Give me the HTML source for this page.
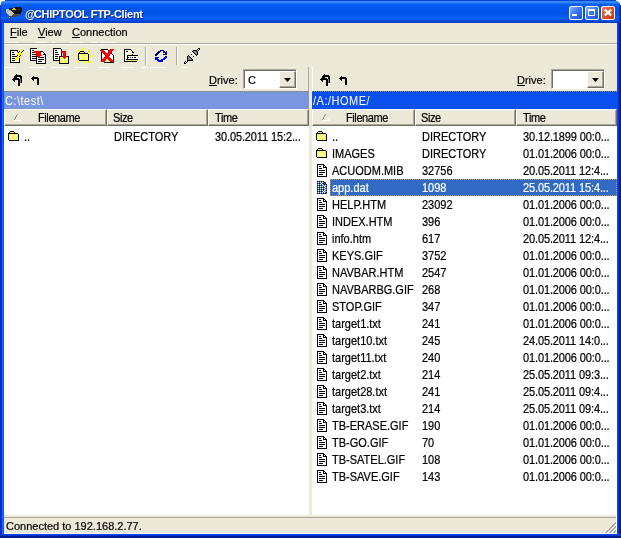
<!DOCTYPE html>
<html><head><meta charset="utf-8">
<style>
html,body{margin:0;padding:0;width:621px;height:538px;overflow:hidden;background:#fff;}
body{position:relative;font-family:"Liberation Sans",sans-serif;font-size:11px;color:#000;}
.t,.ht,.menu,.tt{will-change:transform;}
.t,.ht,.menu{-webkit-text-stroke:0.2px currentColor;}
div,svg,span{position:absolute;box-sizing:border-box;}
svg{overflow:visible;shape-rendering:crispEdges;}
#frame{left:0;top:0;width:621px;height:538px;
 background:linear-gradient(to right,#1020c8 0,#1020c8 1px,#0830d8 1px,#0830d8 2px,#1870f8 2px,#1870f8 3px,#0058e8 3px,#0058e8 617px,#0a44f0 617px,#0a44f0 618px,#0638dc 618px,#0638dc 619px,#0420a8 619px,#0420a8 620px,#001890 620px);}
#title{left:0;top:0;width:621px;height:23px;
 background:linear-gradient(to bottom,#0843d8 0,#0843d8 1px,#3d8cff 1px,#2f80fb 3px,#0a60f4 4px,#0058ee 7px,#0054e6 12px,#0056ea 15px,#0a64fa 17px,#0058ee 19px,#004ee0 21px,#003cc4 22px,#003cc4 23px);}
#bottom{left:0;top:534px;width:621px;height:4px;background:linear-gradient(to bottom,#0a44f0 0,#0a44f0 1px,#0632d0 1px,#0632d0 2px,#0a1a90 2px,#0a1a90 3px,#00188a 3px);}
#client{left:4px;top:23px;width:613px;height:511px;background:#ece9d8;}
.tt{color:#fff;font-weight:bold;font-size:11px;line-height:14px;white-space:nowrap;text-shadow:1px 1px 0 #0a1a80;}
.btn{width:14px;height:14px;top:6px;border:1px solid #fff;border-radius:2px;}
.menu{top:26px;line-height:13px;white-space:nowrap;}
.t{line-height:17px;white-space:nowrap;font-size:11px;transform-origin:0 12px;transform:scaleY(1.12);}
.sel{color:#fff;}
.selbg{width:287px;height:17px;background:#316ac5;}
.ic{position:absolute;}
.hdr{top:109px;height:17px;background:#ece9d8;}
.ht{top:109px;line-height:17px;white-space:nowrap;font-size:11px;letter-spacing:-0.4px;transform-origin:0 12px;transform:scaleY(1.12);}
</style></head><body>
<svg width="0" height="0" style="position:absolute">
 <defs>
  <pattern id="dy" width="2" height="2" patternUnits="userSpaceOnUse"><rect width="2" height="2" fill="#ffff00"/><rect width="1" height="1" fill="#fff"/><rect x="1" y="1" width="1" height="1" fill="#fff"/></pattern>
  <pattern id="db" width="2" height="2" patternUnits="userSpaceOnUse"><rect width="2" height="2" fill="#316ac5"/><rect width="1" height="1" fill="#000"/><rect x="1" y="1" width="1" height="1" fill="#000"/></pattern>
  <pattern id="dw" width="2" height="2" patternUnits="userSpaceOnUse"><rect width="2" height="2" fill="#316ac5"/><rect width="1" height="1" fill="#fff"/><rect x="1" y="1" width="1" height="1" fill="#fff"/></pattern>
  <g id="ifolder">
   <rect x="2" y="3" width="4" height="1" fill="#000"/>
   <rect x="1" y="4" width="1" height="1" fill="#000"/><rect x="6" y="4" width="1" height="1" fill="#000"/>
   <rect x="2" y="4" width="4" height="1" fill="url(#dy)"/>
   <rect x="0" y="5" width="10" height="1" fill="#000"/>
   <rect x="0" y="5" width="1" height="7" fill="#000"/>
   <rect x="1" y="6" width="9" height="6" fill="url(#dy)"/>
   <rect x="10" y="6" width="1" height="7" fill="#000"/>
   <rect x="1" y="12" width="10" height="1" fill="#000"/>
  </g>
  <g id="ifile">
   <path d="M1 2H8L11 5V15H1Z" fill="#fff"/>
   <rect x="1" y="2" width="7" height="1" fill="#000"/>
   <rect x="1" y="2" width="1" height="13" fill="#000"/>
   <rect x="1" y="14" width="10" height="1" fill="#000"/>
   <rect x="10" y="5" width="1" height="10" fill="#000"/>
   <rect x="7" y="3" width="2" height="1" fill="#000"/><rect x="7" y="4" width="1" height="1" fill="#000"/><rect x="9" y="4" width="1" height="1" fill="#000"/><rect x="7" y="5" width="3" height="1" fill="#000"/>
   <rect x="3" y="4" width="2" height="1" fill="#000"/>
   <rect x="3" y="6" width="3" height="1" fill="#000"/>
   <rect x="3" y="8" width="6" height="1" fill="#000"/>
   <rect x="3" y="10" width="6" height="1" fill="#000"/>
   <rect x="3" y="12" width="4" height="1" fill="#000"/>
  </g>
  <g id="ifilesel">
   <path d="M1 2H8L11 5V15H1Z" fill="url(#db)"/>
   <path d="M2 3H7V6H10V14H2Z" fill="url(#dw)"/>
  </g>
 </defs>
</svg>

<div id="frame"></div>
<div id="title"></div>
<div id="bottom"></div>
<div id="client"></div>

<!-- title icon -->
<svg style="left:0;top:0" width="24" height="22">
<rect x="14" y="7" width="7" height="1" fill="#101010"/>
<rect x="10" y="8" width="12" height="1" fill="#101010"/>
<rect x="13" y="8" width="2" height="1" fill="#d8c020"/>
<rect x="6" y="9" width="3" height="1" fill="#c4c0b8"/>
<rect x="9" y="9" width="13" height="1" fill="#101010"/>
<rect x="12" y="9" width="4" height="1" fill="#d8c020"/>
<rect x="18" y="9" width="2" height="1" fill="#a02010"/>
<rect x="6" y="10" width="5" height="1" fill="#c4c0b8"/>
<rect x="11" y="10" width="11" height="1" fill="#101010"/>
<rect x="6" y="11" width="6" height="1" fill="#c4c0b8"/>
<rect x="12" y="11" width="10" height="1" fill="#101010"/>
<rect x="6" y="12" width="7" height="1" fill="#c4c0b8"/>
<rect x="9" y="12" width="1" height="1" fill="#ffffff"/>
<rect x="13" y="12" width="8" height="1" fill="#101010"/>
<rect x="7" y="13" width="7" height="1" fill="#c4c0b8"/>
<rect x="14" y="13" width="7" height="1" fill="#101010"/>
<rect x="8" y="14" width="5" height="1" fill="#c4c0b8"/>
<rect x="13" y="14" width="7" height="1" fill="#504840"/>
<rect x="9" y="15" width="3" height="1" fill="#c4c0b8"/>
<rect x="12" y="15" width="6" height="1" fill="#504840"/>
<rect x="9" y="16" width="5" height="1" fill="#504840"/>
<rect x="15" y="16" width="2" height="1" fill="#504840"/>
<rect x="9" y="17" width="1" height="1" fill="#ffffff"/>
<rect x="10" y="17" width="1" height="1" fill="#504840"/>
<rect x="9" y="18" width="2" height="1" fill="#504840"/>
</svg>
<svg style="left:0;top:0" width="6" height="6"><path d="M0 0H5V1H2V2H1V3H1V5H0Z" fill="#fff"/></svg>
<svg style="left:615px;top:0" width="6" height="6"><path d="M6 0H1V1H3V2H4V3H5V5H6Z" fill="#fff"/></svg>
<div style="left:619px;top:5px;width:2px;height:18px;background:linear-gradient(to right,#0838c8,#0020a0)"></div>
<div style="left:0;top:5px;width:1px;height:18px;background:#0830c8"></div>
<div class="tt" style="left:25px;top:7px;letter-spacing:-0.3px;"><span style="position:static;letter-spacing:-1.8px">@</span>CHIPTOOL FTP-Client</div>
<!-- caption buttons -->
<div class="btn" style="left:569px;background:linear-gradient(135deg,#8cb0ff 0,#4a84f8 35%,#2a62ea 70%,#1c4fd8 100%)"></div>
<div style="left:572px;top:14px;width:5px;height:2px;background:#fff"></div>
<div class="btn" style="left:585px;background:linear-gradient(135deg,#8cb0ff 0,#4a84f8 35%,#2a62ea 70%,#1c4fd8 100%)"></div>
<div style="left:588px;top:9px;width:7px;height:7px;border:1px solid #fff;border-top-width:2px"></div>
<div class="btn" style="left:601px;background:linear-gradient(135deg,#f28a6a 0,#e25c34 30%,#d4481e 70%,#c03810 100%)"></div>
<svg style="left:604px;top:9px" width="8" height="7"><path d="M0.8 0.6L7.2 6.4M7.2 0.6L0.8 6.4" stroke="#fff" stroke-width="2.2" shape-rendering="geometricPrecision"/></svg>
<!-- menu -->
<div class="menu" style="left:10px"><u>F</u>ile</div>
<div class="menu" style="left:38px"><u>V</u>iew</div>
<div class="menu" style="left:72px"><u>C</u>onnection</div>
<div style="left:4px;top:42px;width:14px;height:1px;background:#fff"></div><div style="left:35px;top:42px;width:12px;height:1px;background:#fff"></div><div style="left:52px;top:42px;width:3px;height:1px;background:#fff"></div><div style="left:70px;top:42px;width:13px;height:1px;background:#fff"></div><div style="left:91px;top:42px;width:7px;height:1px;background:#fff"></div><div style="left:100px;top:42px;width:16px;height:1px;background:#fff"></div>
<div style="left:4px;top:43px;width:613px;height:1px;background:#aca899"></div>
<div style="left:4px;top:44px;width:613px;height:1px;background:#fff"></div>

<!-- toolbar icons -->
<svg style="left:0;top:0" width="621" height="100"><rect x="11" y="51" width="8" height="11" fill="#ffffff"/><rect x="10" y="50" width="8" height="1" fill="#000000"/><rect x="10" y="50" width="1" height="13" fill="#000000"/><rect x="10" y="62" width="10" height="1" fill="#000000"/><rect x="19" y="56" width="1" height="7" fill="#000000"/><rect x="17" y="51" width="1" height="1" fill="#000000"/><rect x="17" y="52" width="1" height="1" fill="#ffffff"/><rect x="18" y="52" width="1" height="1" fill="#000000"/><rect x="12" y="52" width="2" height="1" fill="#000000"/><rect x="12" y="54" width="3" height="1" fill="#000000"/><rect x="12" y="56" width="5" height="1" fill="#000000"/><rect x="12" y="58" width="4" height="1" fill="#000000"/><rect x="12" y="60" width="4" height="1" fill="#000000"/><rect x="22" y="50" width="1" height="1" fill="#ffff00"/><rect x="21" y="50" width="1" height="1" fill="#ffff00"/><rect x="23" y="50" width="1" height="1" fill="#000000"/><rect x="20" y="51" width="2" height="1" fill="#ffff00"/><rect x="19" y="51" width="1" height="1" fill="#000000"/><rect x="22" y="51" width="1" height="1" fill="#000000"/><rect x="19" y="52" width="2" height="1" fill="#ffff00"/><rect x="18" y="52" width="1" height="1" fill="#000000"/><rect x="21" y="52" width="1" height="1" fill="#000000"/><rect x="19" y="53" width="2" height="1" fill="#ffff00"/><rect x="18" y="53" width="1" height="1" fill="#ffff00"/><rect x="21" y="53" width="1" height="1" fill="#ffff00"/><rect x="18" y="54" width="2" height="1" fill="#ffff00"/><rect x="17" y="54" width="1" height="1" fill="#ffff00"/><rect x="20" y="54" width="1" height="1" fill="#ffff00"/><rect x="18" y="55" width="2" height="1" fill="#ffff00"/><rect x="17" y="55" width="1" height="1" fill="#000000"/><rect x="20" y="55" width="1" height="1" fill="#000000"/><rect x="17" y="56" width="2" height="1" fill="#ffff00"/><rect x="16" y="56" width="1" height="1" fill="#000000"/><rect x="19" y="56" width="1" height="1" fill="#000000"/><rect x="17" y="57" width="2" height="1" fill="#ffff00"/><rect x="16" y="57" width="1" height="1" fill="#ffff00"/><rect x="19" y="57" width="1" height="1" fill="#ffff00"/><rect x="16" y="58" width="2" height="1" fill="#ffff00"/><rect x="15" y="58" width="1" height="1" fill="#ffff00"/><rect x="18" y="58" width="1" height="1" fill="#ffff00"/><rect x="15" y="59" width="2" height="1" fill="#ffff00"/><rect x="14" y="59" width="1" height="1" fill="#ffff00"/><rect x="17" y="59" width="1" height="1" fill="#ffff00"/><rect x="15" y="60" width="1" height="1" fill="#ffff00"/><rect x="14" y="60" width="1" height="1" fill="#000000"/><rect x="16" y="60" width="1" height="1" fill="#ffff00"/><rect x="31" y="49" width="6" height="11" fill="#ffffff"/><rect x="30" y="48" width="7" height="1" fill="#000000"/><rect x="30" y="48" width="1" height="13" fill="#000000"/><rect x="30" y="60" width="7" height="1" fill="#000000"/><rect x="32" y="50" width="2" height="1" fill="#000000"/><rect x="32" y="52" width="2" height="1" fill="#000000"/><rect x="32" y="54" width="4" height="1" fill="#000000"/><rect x="32" y="56" width="4" height="1" fill="#000000"/><rect x="32" y="58" width="4" height="1" fill="#000000"/><rect x="37" y="52" width="8" height="11" fill="#ffffff"/><rect x="36" y="51" width="7" height="1" fill="#000000"/><rect x="36" y="51" width="1" height="13" fill="#000000"/><rect x="36" y="63" width="10" height="1" fill="#000000"/><rect x="45" y="54" width="1" height="10" fill="#000000"/><rect x="43" y="52" width="1" height="1" fill="#000000"/><rect x="44" y="53" width="1" height="1" fill="#000000"/><rect x="43" y="53" width="1" height="1" fill="#ffffff"/><rect x="43" y="54" width="2" height="1" fill="#000000"/><rect x="38" y="57" width="6" height="1" fill="#000000"/><rect x="38" y="59" width="6" height="1" fill="#000000"/><rect x="38" y="61" width="4" height="1" fill="#000000"/><rect x="34" y="51" width="6" height="1" fill="#ff0000"/><rect x="34" y="52" width="7" height="1" fill="#ff0000"/><rect x="36" y="53" width="5" height="2" fill="#ff0000"/><rect x="36" y="55" width="6" height="1" fill="#ff0000"/><rect x="37" y="56" width="3" height="1" fill="#ff0000"/><rect x="38" y="57" width="1" height="1" fill="#ff0000"/><rect x="54" y="49" width="7" height="11" fill="#ffffff"/><rect x="53" y="48" width="8" height="1" fill="#000000"/><rect x="53" y="48" width="1" height="13" fill="#000000"/><rect x="53" y="60" width="6" height="1" fill="#000000"/><rect x="61" y="50" width="1" height="6" fill="#000000"/><rect x="61" y="49" width="1" height="1" fill="#000000"/><rect x="60" y="50" width="1" height="1" fill="#ffffff"/><rect x="55" y="50" width="2" height="1" fill="#000000"/><rect x="55" y="52" width="3" height="1" fill="#000000"/><rect x="55" y="54" width="4" height="1" fill="#000000"/><rect x="55" y="56" width="3" height="1" fill="#000000"/><rect x="55" y="58" width="3" height="1" fill="#000000"/><rect x="59" y="56" width="10" height="1" fill="#000000"/><rect x="59" y="56" width="1" height="8" fill="#000000"/><rect x="68" y="56" width="1" height="8" fill="#000000"/><rect x="59" y="63" width="10" height="1" fill="#000000"/><rect x="60" y="57" width="8" height="6" fill="#ffff00"/><rect x="61" y="57" width="1" height="1" fill="#ffffff"/><rect x="63" y="57" width="1" height="1" fill="#ffffff"/><rect x="65" y="57" width="1" height="1" fill="#ffffff"/><rect x="67" y="57" width="1" height="1" fill="#ffffff"/><rect x="60" y="58" width="1" height="1" fill="#ffffff"/><rect x="62" y="58" width="1" height="1" fill="#ffffff"/><rect x="64" y="58" width="1" height="1" fill="#ffffff"/><rect x="66" y="58" width="1" height="1" fill="#ffffff"/><rect x="61" y="59" width="1" height="1" fill="#ffffff"/><rect x="63" y="59" width="1" height="1" fill="#ffffff"/><rect x="65" y="59" width="1" height="1" fill="#ffffff"/><rect x="67" y="59" width="1" height="1" fill="#ffffff"/><rect x="60" y="60" width="1" height="1" fill="#ffffff"/><rect x="62" y="60" width="1" height="1" fill="#ffffff"/><rect x="64" y="60" width="1" height="1" fill="#ffffff"/><rect x="66" y="60" width="1" height="1" fill="#ffffff"/><rect x="61" y="61" width="1" height="1" fill="#ffffff"/><rect x="63" y="61" width="1" height="1" fill="#ffffff"/><rect x="65" y="61" width="1" height="1" fill="#ffffff"/><rect x="67" y="61" width="1" height="1" fill="#ffffff"/><rect x="60" y="62" width="1" height="1" fill="#ffffff"/><rect x="62" y="62" width="1" height="1" fill="#ffffff"/><rect x="64" y="62" width="1" height="1" fill="#ffffff"/><rect x="66" y="62" width="1" height="1" fill="#ffffff"/><rect x="61" y="51" width="5" height="1" fill="#ff0000"/><rect x="62" y="52" width="4" height="1" fill="#ff0000"/><rect x="63" y="53" width="3" height="3" fill="#ff0000"/><rect x="62" y="56" width="5" height="1" fill="#ff0000"/><rect x="63" y="57" width="3" height="1" fill="#ff0000"/><rect x="64" y="58" width="1" height="1" fill="#ff0000"/><rect x="82" y="48" width="2" height="3" fill="#ffff00"/><rect x="77" y="50" width="2" height="2" fill="#ffff00"/><rect x="88" y="50" width="2" height="3" fill="#ffff00"/><rect x="76" y="55" width="2" height="2" fill="#ffff00"/><rect x="90" y="55" width="3" height="2" fill="#ffff00"/><rect x="77" y="61" width="2" height="2" fill="#ffff00"/><rect x="84" y="61" width="2" height="2" fill="#ffff00"/><rect x="88" y="61" width="3" height="2" fill="#ffff00"/><rect x="80" y="51" width="4" height="1" fill="#000000"/><rect x="79" y="52" width="1" height="1" fill="#000000"/><rect x="84" y="52" width="1" height="1" fill="#000000"/><rect x="80" y="52" width="4" height="1" fill="#ffff00"/><rect x="80" y="52" width="1" height="1" fill="#ffffff"/><rect x="82" y="52" width="1" height="1" fill="#ffffff"/><rect x="78" y="53" width="10" height="1" fill="#000000"/><rect x="78" y="53" width="1" height="7" fill="#000000"/><rect x="79" y="54" width="9" height="6" fill="#ffff00"/><rect x="80" y="54" width="1" height="1" fill="#ffffff"/><rect x="82" y="54" width="1" height="1" fill="#ffffff"/><rect x="84" y="54" width="1" height="1" fill="#ffffff"/><rect x="86" y="54" width="1" height="1" fill="#ffffff"/><rect x="79" y="55" width="1" height="1" fill="#ffffff"/><rect x="81" y="55" width="1" height="1" fill="#ffffff"/><rect x="83" y="55" width="1" height="1" fill="#ffffff"/><rect x="85" y="55" width="1" height="1" fill="#ffffff"/><rect x="87" y="55" width="1" height="1" fill="#ffffff"/><rect x="80" y="56" width="1" height="1" fill="#ffffff"/><rect x="82" y="56" width="1" height="1" fill="#ffffff"/><rect x="84" y="56" width="1" height="1" fill="#ffffff"/><rect x="86" y="56" width="1" height="1" fill="#ffffff"/><rect x="79" y="57" width="1" height="1" fill="#ffffff"/><rect x="81" y="57" width="1" height="1" fill="#ffffff"/><rect x="83" y="57" width="1" height="1" fill="#ffffff"/><rect x="85" y="57" width="1" height="1" fill="#ffffff"/><rect x="87" y="57" width="1" height="1" fill="#ffffff"/><rect x="80" y="58" width="1" height="1" fill="#ffffff"/><rect x="82" y="58" width="1" height="1" fill="#ffffff"/><rect x="84" y="58" width="1" height="1" fill="#ffffff"/><rect x="86" y="58" width="1" height="1" fill="#ffffff"/><rect x="79" y="59" width="1" height="1" fill="#ffffff"/><rect x="81" y="59" width="1" height="1" fill="#ffffff"/><rect x="83" y="59" width="1" height="1" fill="#ffffff"/><rect x="85" y="59" width="1" height="1" fill="#ffffff"/><rect x="87" y="59" width="1" height="1" fill="#ffffff"/><rect x="88" y="54" width="1" height="7" fill="#000000"/><rect x="79" y="60" width="10" height="1" fill="#000000"/><rect x="102" y="50" width="11" height="12" fill="#ffffff"/><rect x="101" y="49" width="7" height="1" fill="#000000"/><rect x="101" y="49" width="1" height="13" fill="#000000"/><rect x="101" y="61" width="3" height="1" fill="#000000"/><rect x="104" y="62" width="10" height="1" fill="#000000"/><rect x="113" y="56" width="1" height="7" fill="#000000"/><rect x="108" y="50" width="1" height="1" fill="#000000"/><rect x="109" y="51" width="1" height="1" fill="#000000"/><rect x="110" y="52" width="1" height="1" fill="#000000"/><rect x="111" y="53" width="1" height="1" fill="#000000"/><rect x="112" y="54" width="1" height="1" fill="#000000"/><rect x="113" y="55" width="1" height="1" fill="#000000"/><rect x="107" y="57" width="1" height="1" fill="#ffff00"/><rect x="107" y="57" width="1" height="1" fill="#ffffff"/><rect x="106" y="58" width="3" height="1" fill="#ffff00"/><rect x="106" y="58" width="1" height="1" fill="#ffffff"/><rect x="108" y="58" width="1" height="1" fill="#ffffff"/><rect x="105" y="59" width="5" height="1" fill="#ffff00"/><rect x="105" y="59" width="1" height="1" fill="#ffffff"/><rect x="107" y="59" width="1" height="1" fill="#ffffff"/><rect x="109" y="59" width="1" height="1" fill="#ffffff"/><rect x="104" y="60" width="7" height="1" fill="#ffff00"/><rect x="104" y="60" width="1" height="1" fill="#ffffff"/><rect x="106" y="60" width="1" height="1" fill="#ffffff"/><rect x="108" y="60" width="1" height="1" fill="#ffffff"/><rect x="110" y="60" width="1" height="1" fill="#ffffff"/><rect x="103" y="61" width="9" height="1" fill="#ffff00"/><rect x="103" y="61" width="1" height="1" fill="#ffffff"/><rect x="105" y="61" width="1" height="1" fill="#ffffff"/><rect x="107" y="61" width="1" height="1" fill="#ffffff"/><rect x="109" y="61" width="1" height="1" fill="#ffffff"/><rect x="111" y="61" width="1" height="1" fill="#ffffff"/><rect x="100" y="50" width="4" height="1" fill="#ff0000"/><rect x="101" y="51" width="4" height="1" fill="#ff0000"/><rect x="102" y="52" width="4" height="1" fill="#ff0000"/><rect x="103" y="53" width="4" height="1" fill="#ff0000"/><rect x="104" y="54" width="4" height="1" fill="#ff0000"/><rect x="105" y="55" width="4" height="1" fill="#ff0000"/><rect x="105" y="56" width="4" height="1" fill="#ff0000"/><rect x="106" y="57" width="4" height="1" fill="#ff0000"/><rect x="107" y="58" width="4" height="1" fill="#ff0000"/><rect x="108" y="59" width="4" height="1" fill="#ff0000"/><rect x="109" y="60" width="4" height="1" fill="#ff0000"/><rect x="110" y="61" width="4" height="1" fill="#ff0000"/><rect x="110" y="49" width="4" height="1" fill="#ff0000"/><rect x="109" y="50" width="4" height="1" fill="#ff0000"/><rect x="108" y="51" width="4" height="1" fill="#ff0000"/><rect x="108" y="52" width="4" height="1" fill="#ff0000"/><rect x="107" y="53" width="4" height="1" fill="#ff0000"/><rect x="106" y="54" width="4" height="1" fill="#ff0000"/><rect x="106" y="55" width="4" height="1" fill="#ff0000"/><rect x="105" y="56" width="4" height="1" fill="#ff0000"/><rect x="104" y="57" width="4" height="1" fill="#ff0000"/><rect x="103" y="58" width="4" height="1" fill="#ff0000"/><rect x="102" y="59" width="4" height="1" fill="#ff0000"/><rect x="102" y="60" width="4" height="1" fill="#ff0000"/><rect x="101" y="61" width="4" height="1" fill="#ff0000"/><rect x="125" y="50" width="7" height="11" fill="#ffffff"/><rect x="124" y="49" width="7" height="1" fill="#000000"/><rect x="124" y="49" width="1" height="13" fill="#000000"/><rect x="124" y="61" width="3" height="1" fill="#000000"/><rect x="131" y="50" width="1" height="1" fill="#000000"/><rect x="132" y="51" width="1" height="1" fill="#000000"/><rect x="133" y="52" width="1" height="1" fill="#000000"/><rect x="132" y="52" width="1" height="3" fill="#000000"/><rect x="131" y="51" width="1" height="1" fill="#ffffff"/><rect x="132" y="53" width="1" height="1" fill="#ffffff"/><rect x="126" y="51" width="2" height="1" fill="#000000"/><rect x="128" y="54" width="4" height="1" fill="#ffff00"/><rect x="128" y="54" width="1" height="1" fill="#ffffff"/><rect x="130" y="54" width="1" height="1" fill="#ffffff"/><rect x="127" y="55" width="11" height="1" fill="#000000"/><rect x="128" y="56" width="10" height="3" fill="#ffffff"/><rect x="127" y="55" width="1" height="5" fill="#000000"/><rect x="128" y="57" width="1" height="1" fill="#000000"/><rect x="130" y="57" width="1" height="1" fill="#000000"/><rect x="132" y="57" width="1" height="1" fill="#000000"/><rect x="134" y="57" width="1" height="1" fill="#000000"/><rect x="135" y="57" width="1" height="1" fill="#000000"/><rect x="126" y="59" width="12" height="1" fill="#000000"/><rect x="127" y="60" width="9" height="1" fill="#ffff00"/><rect x="128" y="60" width="1" height="1" fill="#ffffff"/><rect x="130" y="60" width="1" height="1" fill="#ffffff"/><rect x="132" y="60" width="1" height="1" fill="#ffffff"/><rect x="134" y="60" width="1" height="1" fill="#ffffff"/><rect x="127" y="61" width="10" height="1" fill="#000000"/><rect x="198" y="48" width="2" height="1" fill="#000000"/><rect x="197" y="49" width="3" height="1" fill="#000000"/><rect x="198" y="49" width="1" height="1" fill="#ffffff"/><rect x="196" y="50" width="3" height="1" fill="#000000"/><rect x="197" y="50" width="1" height="1" fill="#ffffff"/><rect x="196" y="51" width="2" height="1" fill="#000000"/><rect x="193" y="50" width="4" height="1" fill="#000000"/><rect x="192" y="51" width="1" height="1" fill="#000000"/><rect x="193" y="51" width="4" height="1" fill="#808080"/><rect x="197" y="51" width="1" height="1" fill="#000000"/><rect x="193" y="52" width="1" height="1" fill="#000000"/><rect x="194" y="52" width="3" height="1" fill="#808080"/><rect x="197" y="52" width="1" height="1" fill="#000000"/><rect x="194" y="53" width="1" height="1" fill="#000000"/><rect x="195" y="53" width="2" height="1" fill="#808080"/><rect x="197" y="53" width="1" height="1" fill="#000000"/><rect x="195" y="54" width="1" height="1" fill="#000000"/><rect x="196" y="54" width="1" height="1" fill="#808080"/><rect x="197" y="54" width="1" height="1" fill="#000000"/><rect x="196" y="55" width="1" height="1" fill="#000000"/><rect x="191" y="54" width="1" height="1" fill="#000000"/><rect x="193" y="56" width="1" height="1" fill="#000000"/><rect x="188" y="55" width="1" height="1" fill="#000000"/><rect x="187" y="56" width="1" height="5" fill="#000000"/><rect x="188" y="56" width="1" height="1" fill="#808080"/><rect x="189" y="56" width="1" height="1" fill="#000000"/><rect x="188" y="57" width="2" height="1" fill="#808080"/><rect x="190" y="57" width="1" height="1" fill="#000000"/><rect x="188" y="58" width="3" height="1" fill="#808080"/><rect x="191" y="58" width="1" height="1" fill="#000000"/><rect x="188" y="59" width="4" height="1" fill="#808080"/><rect x="192" y="59" width="1" height="1" fill="#000000"/><rect x="187" y="60" width="6" height="1" fill="#000000"/><rect x="185" y="61" width="3" height="1" fill="#000000"/><rect x="186" y="61" width="1" height="1" fill="#ffffff"/><rect x="184" y="62" width="3" height="1" fill="#000000"/><rect x="185" y="62" width="1" height="1" fill="#ffffff"/><rect x="184" y="63" width="2" height="1" fill="#000000"/><rect x="160" y="50" width="4" height="1" fill="#000080"/><rect x="158" y="51" width="7" height="1" fill="#000080"/><rect x="157" y="52" width="3" height="1" fill="#000080"/><rect x="163" y="52" width="4" height="1" fill="#000080"/><rect x="156" y="53" width="3" height="1" fill="#000080"/><rect x="165" y="53" width="2" height="1" fill="#000080"/><rect x="155" y="54" width="3" height="1" fill="#000080"/><rect x="163" y="54" width="4" height="1" fill="#000080"/><rect x="155" y="55" width="2" height="1" fill="#000080"/><rect x="166" y="51" width="1" height="1" fill="#000080"/><rect x="161" y="51" width="1" height="1" fill="#ece9d8"/><rect x="162" y="51" width="1" height="1" fill="#ece9d8"/><rect x="165" y="56" width="2" height="1" fill="#0000ff"/><rect x="155" y="57" width="4" height="1" fill="#0000ff"/><rect x="164" y="57" width="3" height="1" fill="#0000ff"/><rect x="155" y="58" width="3" height="1" fill="#0000ff"/><rect x="163" y="58" width="3" height="1" fill="#0000ff"/><rect x="155" y="59" width="1" height="1" fill="#0000ff"/><rect x="156" y="59" width="3" height="1" fill="#0000ff"/><rect x="161" y="59" width="4" height="1" fill="#0000ff"/><rect x="157" y="60" width="6" height="1" fill="#0000ff"/><rect x="158" y="61" width="5" height="1" fill="#0000ff"/><rect x="16" y="74" width="1" height="1" fill="#000000"/><rect x="15" y="75" width="1" height="1" fill="#000000"/><rect x="16" y="75" width="1" height="1" fill="#000000"/><rect x="17" y="75" width="1" height="1" fill="#000000"/><rect x="18" y="75" width="1" height="1" fill="#000000"/><rect x="19" y="75" width="1" height="1" fill="#000000"/><rect x="20" y="75" width="1" height="1" fill="#000000"/><rect x="14" y="76" width="1" height="1" fill="#000000"/><rect x="15" y="76" width="1" height="1" fill="#000000"/><rect x="16" y="76" width="1" height="1" fill="#000000"/><rect x="17" y="76" width="1" height="1" fill="#000000"/><rect x="18" y="76" width="1" height="1" fill="#000000"/><rect x="19" y="76" width="1" height="1" fill="#000000"/><rect x="20" y="76" width="1" height="1" fill="#000000"/><rect x="21" y="76" width="1" height="1" fill="#000000"/><rect x="15" y="77" width="1" height="1" fill="#000000"/><rect x="16" y="77" width="1" height="1" fill="#000000"/><rect x="20" y="77" width="1" height="1" fill="#000000"/><rect x="21" y="77" width="1" height="1" fill="#000000"/><rect x="16" y="78" width="1" height="1" fill="#000000"/><rect x="20" y="78" width="1" height="1" fill="#000000"/><rect x="21" y="78" width="1" height="1" fill="#000000"/><rect x="20" y="79" width="1" height="1" fill="#000000"/><rect x="21" y="79" width="1" height="1" fill="#000000"/><rect x="20" y="80" width="1" height="1" fill="#000000"/><rect x="21" y="80" width="1" height="1" fill="#000000"/><rect x="20" y="81" width="1" height="1" fill="#000000"/><rect x="21" y="81" width="1" height="1" fill="#000000"/><rect x="20" y="82" width="1" height="1" fill="#000000"/><rect x="21" y="82" width="1" height="1" fill="#000000"/><rect x="20" y="79" width="1" height="1" fill="#808080"/><rect x="20" y="80" width="1" height="1" fill="#808080"/><rect x="20" y="81" width="1" height="1" fill="#808080"/><rect x="20" y="82" width="1" height="1" fill="#808080"/><rect x="14" y="77" width="1" height="1" fill="#000000"/><rect x="13" y="78" width="1" height="1" fill="#000000"/><rect x="14" y="78" width="1" height="1" fill="#000000"/><rect x="15" y="78" width="1" height="1" fill="#000000"/><rect x="16" y="78" width="1" height="1" fill="#000000"/><rect x="17" y="78" width="1" height="1" fill="#000000"/><rect x="18" y="78" width="1" height="1" fill="#000000"/><rect x="12" y="79" width="1" height="1" fill="#000000"/><rect x="13" y="79" width="1" height="1" fill="#000000"/><rect x="14" y="79" width="1" height="1" fill="#000000"/><rect x="15" y="79" width="1" height="1" fill="#000000"/><rect x="16" y="79" width="1" height="1" fill="#000000"/><rect x="17" y="79" width="1" height="1" fill="#000000"/><rect x="18" y="79" width="1" height="1" fill="#000000"/><rect x="19" y="79" width="1" height="1" fill="#000000"/><rect x="13" y="80" width="1" height="1" fill="#000000"/><rect x="14" y="80" width="1" height="1" fill="#000000"/><rect x="18" y="80" width="1" height="1" fill="#000000"/><rect x="19" y="80" width="1" height="1" fill="#000000"/><rect x="14" y="81" width="1" height="1" fill="#000000"/><rect x="18" y="81" width="1" height="1" fill="#000000"/><rect x="19" y="81" width="1" height="1" fill="#000000"/><rect x="18" y="82" width="1" height="1" fill="#000000"/><rect x="19" y="82" width="1" height="1" fill="#000000"/><rect x="18" y="83" width="1" height="1" fill="#000000"/><rect x="19" y="83" width="1" height="1" fill="#000000"/><rect x="18" y="84" width="1" height="1" fill="#000000"/><rect x="19" y="84" width="1" height="1" fill="#000000"/><rect x="18" y="85" width="1" height="1" fill="#000000"/><rect x="19" y="85" width="1" height="1" fill="#000000"/><rect x="33" y="76" width="1" height="1" fill="#000000"/><rect x="32" y="77" width="1" height="1" fill="#000000"/><rect x="33" y="77" width="1" height="1" fill="#000000"/><rect x="34" y="77" width="1" height="1" fill="#000000"/><rect x="35" y="77" width="1" height="1" fill="#000000"/><rect x="36" y="77" width="1" height="1" fill="#000000"/><rect x="37" y="77" width="1" height="1" fill="#000000"/><rect x="31" y="78" width="1" height="1" fill="#000000"/><rect x="32" y="78" width="1" height="1" fill="#000000"/><rect x="33" y="78" width="1" height="1" fill="#000000"/><rect x="34" y="78" width="1" height="1" fill="#000000"/><rect x="35" y="78" width="1" height="1" fill="#000000"/><rect x="36" y="78" width="1" height="1" fill="#000000"/><rect x="37" y="78" width="1" height="1" fill="#000000"/><rect x="38" y="78" width="1" height="1" fill="#000000"/><rect x="32" y="79" width="1" height="1" fill="#000000"/><rect x="33" y="79" width="1" height="1" fill="#000000"/><rect x="37" y="79" width="1" height="1" fill="#000000"/><rect x="38" y="79" width="1" height="1" fill="#000000"/><rect x="33" y="80" width="1" height="1" fill="#000000"/><rect x="37" y="80" width="1" height="1" fill="#000000"/><rect x="38" y="80" width="1" height="1" fill="#000000"/><rect x="37" y="81" width="1" height="1" fill="#000000"/><rect x="38" y="81" width="1" height="1" fill="#000000"/><rect x="37" y="82" width="1" height="1" fill="#000000"/><rect x="38" y="82" width="1" height="1" fill="#000000"/><rect x="37" y="83" width="1" height="1" fill="#000000"/><rect x="38" y="83" width="1" height="1" fill="#000000"/><rect x="37" y="84" width="1" height="1" fill="#000000"/><rect x="38" y="84" width="1" height="1" fill="#000000"/><rect x="324" y="74" width="1" height="1" fill="#000000"/><rect x="323" y="75" width="1" height="1" fill="#000000"/><rect x="324" y="75" width="1" height="1" fill="#000000"/><rect x="325" y="75" width="1" height="1" fill="#000000"/><rect x="326" y="75" width="1" height="1" fill="#000000"/><rect x="327" y="75" width="1" height="1" fill="#000000"/><rect x="328" y="75" width="1" height="1" fill="#000000"/><rect x="322" y="76" width="1" height="1" fill="#000000"/><rect x="323" y="76" width="1" height="1" fill="#000000"/><rect x="324" y="76" width="1" height="1" fill="#000000"/><rect x="325" y="76" width="1" height="1" fill="#000000"/><rect x="326" y="76" width="1" height="1" fill="#000000"/><rect x="327" y="76" width="1" height="1" fill="#000000"/><rect x="328" y="76" width="1" height="1" fill="#000000"/><rect x="329" y="76" width="1" height="1" fill="#000000"/><rect x="323" y="77" width="1" height="1" fill="#000000"/><rect x="324" y="77" width="1" height="1" fill="#000000"/><rect x="328" y="77" width="1" height="1" fill="#000000"/><rect x="329" y="77" width="1" height="1" fill="#000000"/><rect x="324" y="78" width="1" height="1" fill="#000000"/><rect x="328" y="78" width="1" height="1" fill="#000000"/><rect x="329" y="78" width="1" height="1" fill="#000000"/><rect x="328" y="79" width="1" height="1" fill="#000000"/><rect x="329" y="79" width="1" height="1" fill="#000000"/><rect x="328" y="80" width="1" height="1" fill="#000000"/><rect x="329" y="80" width="1" height="1" fill="#000000"/><rect x="328" y="81" width="1" height="1" fill="#000000"/><rect x="329" y="81" width="1" height="1" fill="#000000"/><rect x="328" y="82" width="1" height="1" fill="#000000"/><rect x="329" y="82" width="1" height="1" fill="#000000"/><rect x="328" y="79" width="1" height="1" fill="#808080"/><rect x="328" y="80" width="1" height="1" fill="#808080"/><rect x="328" y="81" width="1" height="1" fill="#808080"/><rect x="328" y="82" width="1" height="1" fill="#808080"/><rect x="322" y="77" width="1" height="1" fill="#000000"/><rect x="321" y="78" width="1" height="1" fill="#000000"/><rect x="322" y="78" width="1" height="1" fill="#000000"/><rect x="323" y="78" width="1" height="1" fill="#000000"/><rect x="324" y="78" width="1" height="1" fill="#000000"/><rect x="325" y="78" width="1" height="1" fill="#000000"/><rect x="326" y="78" width="1" height="1" fill="#000000"/><rect x="320" y="79" width="1" height="1" fill="#000000"/><rect x="321" y="79" width="1" height="1" fill="#000000"/><rect x="322" y="79" width="1" height="1" fill="#000000"/><rect x="323" y="79" width="1" height="1" fill="#000000"/><rect x="324" y="79" width="1" height="1" fill="#000000"/><rect x="325" y="79" width="1" height="1" fill="#000000"/><rect x="326" y="79" width="1" height="1" fill="#000000"/><rect x="327" y="79" width="1" height="1" fill="#000000"/><rect x="321" y="80" width="1" height="1" fill="#000000"/><rect x="322" y="80" width="1" height="1" fill="#000000"/><rect x="326" y="80" width="1" height="1" fill="#000000"/><rect x="327" y="80" width="1" height="1" fill="#000000"/><rect x="322" y="81" width="1" height="1" fill="#000000"/><rect x="326" y="81" width="1" height="1" fill="#000000"/><rect x="327" y="81" width="1" height="1" fill="#000000"/><rect x="326" y="82" width="1" height="1" fill="#000000"/><rect x="327" y="82" width="1" height="1" fill="#000000"/><rect x="326" y="83" width="1" height="1" fill="#000000"/><rect x="327" y="83" width="1" height="1" fill="#000000"/><rect x="326" y="84" width="1" height="1" fill="#000000"/><rect x="327" y="84" width="1" height="1" fill="#000000"/><rect x="326" y="85" width="1" height="1" fill="#000000"/><rect x="327" y="85" width="1" height="1" fill="#000000"/><rect x="341" y="76" width="1" height="1" fill="#000000"/><rect x="340" y="77" width="1" height="1" fill="#000000"/><rect x="341" y="77" width="1" height="1" fill="#000000"/><rect x="342" y="77" width="1" height="1" fill="#000000"/><rect x="343" y="77" width="1" height="1" fill="#000000"/><rect x="344" y="77" width="1" height="1" fill="#000000"/><rect x="345" y="77" width="1" height="1" fill="#000000"/><rect x="339" y="78" width="1" height="1" fill="#000000"/><rect x="340" y="78" width="1" height="1" fill="#000000"/><rect x="341" y="78" width="1" height="1" fill="#000000"/><rect x="342" y="78" width="1" height="1" fill="#000000"/><rect x="343" y="78" width="1" height="1" fill="#000000"/><rect x="344" y="78" width="1" height="1" fill="#000000"/><rect x="345" y="78" width="1" height="1" fill="#000000"/><rect x="346" y="78" width="1" height="1" fill="#000000"/><rect x="340" y="79" width="1" height="1" fill="#000000"/><rect x="341" y="79" width="1" height="1" fill="#000000"/><rect x="345" y="79" width="1" height="1" fill="#000000"/><rect x="346" y="79" width="1" height="1" fill="#000000"/><rect x="341" y="80" width="1" height="1" fill="#000000"/><rect x="345" y="80" width="1" height="1" fill="#000000"/><rect x="346" y="80" width="1" height="1" fill="#000000"/><rect x="345" y="81" width="1" height="1" fill="#000000"/><rect x="346" y="81" width="1" height="1" fill="#000000"/><rect x="345" y="82" width="1" height="1" fill="#000000"/><rect x="346" y="82" width="1" height="1" fill="#000000"/><rect x="345" y="83" width="1" height="1" fill="#000000"/><rect x="346" y="83" width="1" height="1" fill="#000000"/><rect x="345" y="84" width="1" height="1" fill="#000000"/><rect x="346" y="84" width="1" height="1" fill="#000000"/></svg>
<div style="left:145px;top:47px;width:1px;height:18px;background:#aca899"></div>
<div style="left:146px;top:47px;width:1px;height:18px;background:#fff"></div>
<div style="left:176px;top:47px;width:1px;height:18px;background:#aca899"></div>
<div style="left:177px;top:47px;width:1px;height:18px;background:#fff"></div>
<!-- rebar white dashes -->
<div style="left:5px;top:67px;width:11px;height:1px;background:#fff"></div><div style="left:29px;top:67px;width:16px;height:1px;background:#fff"></div><div style="left:51px;top:67px;width:17px;height:1px;background:#fff"></div><div style="left:74px;top:67px;width:14px;height:1px;background:#fff"></div><div style="left:98px;top:67px;width:12px;height:1px;background:#fff"></div><div style="left:121px;top:67px;width:13px;height:1px;background:#fff"></div><div style="left:142px;top:67px;width:4px;height:1px;background:#fff"></div><div style="left:150px;top:67px;width:16px;height:1px;background:#fff"></div><div style="left:182px;top:67px;width:5px;height:1px;background:#fff"></div>
<div style="left:4px;top:67px;width:1px;height:24px;background:#fff"></div>
<div style="left:312px;top:67px;width:1px;height:24px;background:#fff"></div>
<div style="left:308px;top:67px;width:1px;height:24px;background:#aca899"></div>

<!-- panel toolbars -->
<div class="menu" style="left:209px;top:74px"><u>D</u>rive:</div>
<div class="menu" style="left:517px;top:74px"><u>D</u>rive:</div>

<!-- combos -->
<div style="left:243px;top:69px;width:54px;height:20px;background:#fff;border-top:1px solid #aca899;border-left:1px solid #aca899;border-right:1px solid #fff;border-bottom:1px solid #fff"></div>
<div style="left:244px;top:70px;width:52px;height:18px;border-top:1px solid #716f64;border-left:1px solid #716f64"></div>
<div style="left:279px;top:71px;width:17px;height:17px;background:#ece9d8;border-top:1px solid #fff;border-left:1px solid #fff;border-right:1px solid #716f64;border-bottom:1px solid #716f64"></div>
<div style="left:280px;top:72px;width:15px;height:15px;border-right:1px solid #aca899;border-bottom:1px solid #aca899"></div>
<svg style="left:284px;top:78px" width="7" height="4"><path d="M0 0H7L3.5 4Z" fill="#000" shape-rendering="geometricPrecision"/></svg>
<div class="menu" style="left:248px;top:74px">C</div>

<div style="left:551px;top:69px;width:54px;height:20px;background:#fff;border-top:1px solid #aca899;border-left:1px solid #aca899;border-right:1px solid #fff;border-bottom:1px solid #fff"></div>
<div style="left:552px;top:70px;width:52px;height:18px;border-top:1px solid #716f64;border-left:1px solid #716f64"></div>
<div style="left:587px;top:71px;width:17px;height:17px;background:#ece9d8;border-top:1px solid #fff;border-left:1px solid #fff;border-right:1px solid #716f64;border-bottom:1px solid #716f64"></div>
<div style="left:588px;top:72px;width:15px;height:15px;border-right:1px solid #aca899;border-bottom:1px solid #aca899"></div>
<svg style="left:592px;top:78px" width="7" height="4"><path d="M0 0H7L3.5 4Z" fill="#000" shape-rendering="geometricPrecision"/></svg>

<!-- path bars -->
<div style="left:4px;top:91px;width:305px;height:18px;background:#7a96df"></div>
<div style="left:312px;top:91px;width:305px;height:18px;background:#0a50ee"></div>
<div style="left:4px;top:91px;width:305px;height:1px;background:repeating-linear-gradient(to right,#8c8a40 0,#8c8a40 1px,transparent 1px,transparent 2px)"></div>
<div style="left:312px;top:91px;width:305px;height:1px;background:repeating-linear-gradient(to right,#8c8a40 0,#8c8a40 1px,transparent 1px,transparent 2px)"></div>
<div class="t" style="left:5px;top:93px;line-height:16px;color:#fff;letter-spacing:0.5px;-webkit-text-stroke:0">C:\test\</div>
<div class="t" style="left:313px;top:93px;line-height:16px;color:#fff;letter-spacing:0.5px;-webkit-text-stroke:0">/A:/HOME/</div>

<!-- headers -->
<div style="left:4px;top:109px;width:305px;height:17px;background:#ece9d8"></div>
<div style="left:312px;top:109px;width:305px;height:17px;background:#ece9d8"></div>
<div style="left:4px;top:109px;width:103px;height:17px;border-top:1px solid #fff;border-left:1px solid #fff;border-right:1px solid #716f64;border-bottom:1px solid #716f64"></div>
<div style="left:5px;top:110px;width:101px;height:15px;border-right:1px solid #aca899;border-bottom:1px solid #aca899"></div>
<div class="ht" style="left:38px;top:110px">Filename</div>
<div style="left:107px;top:109px;width:101px;height:17px;border-top:1px solid #fff;border-left:1px solid #fff;border-right:1px solid #716f64;border-bottom:1px solid #716f64"></div>
<div style="left:108px;top:110px;width:99px;height:15px;border-right:1px solid #aca899;border-bottom:1px solid #aca899"></div>
<div class="ht" style="left:113px;top:110px">Size</div>
<div style="left:208px;top:109px;width:101px;height:17px;border-top:1px solid #fff;border-left:1px solid #fff;border-right:1px solid #716f64;border-bottom:1px solid #716f64"></div>
<div style="left:209px;top:110px;width:99px;height:15px;border-right:1px solid #aca899;border-bottom:1px solid #aca899"></div>
<div class="ht" style="left:215px;top:110px">Time</div>
<div style="left:312px;top:109px;width:103px;height:17px;border-top:1px solid #fff;border-left:1px solid #fff;border-right:1px solid #716f64;border-bottom:1px solid #716f64"></div>
<div style="left:313px;top:110px;width:101px;height:15px;border-right:1px solid #aca899;border-bottom:1px solid #aca899"></div>
<div class="ht" style="left:346px;top:110px">Filename</div>
<div style="left:415px;top:109px;width:101px;height:17px;border-top:1px solid #fff;border-left:1px solid #fff;border-right:1px solid #716f64;border-bottom:1px solid #716f64"></div>
<div style="left:416px;top:110px;width:99px;height:15px;border-right:1px solid #aca899;border-bottom:1px solid #aca899"></div>
<div class="ht" style="left:421px;top:110px">Size</div>
<div style="left:516px;top:109px;width:101px;height:17px;border-top:1px solid #fff;border-left:1px solid #fff;border-right:1px solid #716f64;border-bottom:1px solid #716f64"></div>
<div style="left:517px;top:110px;width:99px;height:15px;border-right:1px solid #aca899;border-bottom:1px solid #aca899"></div>
<div class="ht" style="left:523px;top:110px">Time</div>

<!-- lists -->
<div style="left:4px;top:126px;width:305px;height:389px;background:#fff"></div>
<div style="left:312px;top:126px;width:305px;height:389px;background:#fff"></div>
<svg class="ic" style="left:8px;top:128px" width="16" height="16"><use href="#ifolder"/></svg>
<div class="t nm" style="left:24px;top:129px">..</div>
<div class="t sz" style="left:114px;top:129px">DIRECTORY</div>
<div class="t tm" style="left:215px;top:129px;letter-spacing:-0.12px">30.05.2011 15:2...</div>
<svg class="ic" style="left:316px;top:128px" width="16" height="16"><use href="#ifolder"/></svg>
<div class="t nm" style="left:332px;top:129px">..</div>
<div class="t sz" style="left:422px;top:129px">DIRECTORY</div>
<div class="t tm" style="left:523px;top:129px;letter-spacing:-0.12px">30.12.1899 00:0...</div>
<svg class="ic" style="left:316px;top:145px" width="16" height="16"><use href="#ifolder"/></svg>
<div class="t nm" style="left:332px;top:146px">IMAGES</div>
<div class="t sz" style="left:422px;top:146px">DIRECTORY</div>
<div class="t tm" style="left:523px;top:146px;letter-spacing:-0.12px">01.01.2006 00:0...</div>
<svg class="ic" style="left:316px;top:162px" width="16" height="16"><use href="#ifile"/></svg>
<div class="t nm" style="left:332px;top:163px">ACUODM.MIB</div>
<div class="t sz" style="left:422px;top:163px">32756</div>
<div class="t tm" style="left:523px;top:163px;letter-spacing:-0.12px">20.05.2011 12:4...</div>
<div class="selbg" style="left:330px;top:179px"></div>
<div style="left:330px;top:179px;width:287px;height:1px;background:repeating-linear-gradient(to right,#ce953a 0,#ce953a 1px,transparent 1px,transparent 2px)"></div>
<div style="left:330px;top:195px;width:287px;height:1px;background:repeating-linear-gradient(to right,#ce953a 0,#ce953a 1px,transparent 1px,transparent 2px)"></div>
<div style="left:330px;top:179px;width:1px;height:17px;background:repeating-linear-gradient(to bottom,#ce953a 0,#ce953a 1px,transparent 1px,transparent 2px)"></div>
<div style="left:616px;top:179px;width:1px;height:17px;background:repeating-linear-gradient(to bottom,#ce953a 0,#ce953a 1px,transparent 1px,transparent 2px)"></div>
<svg class="ic" style="left:316px;top:179px" width="16" height="16"><rect x="2" y="3" width="1" height="1" fill="#fff"/><rect x="3" y="3" width="1" height="1" fill="#316ac5"/><rect x="4" y="3" width="1" height="1" fill="#fff"/><rect x="5" y="3" width="1" height="1" fill="#316ac5"/><rect x="6" y="3" width="1" height="1" fill="#fff"/><rect x="7" y="3" width="1" height="1" fill="#316ac5"/><rect x="8" y="3" width="1" height="1" fill="#000"/><rect x="9" y="3" width="1" height="1" fill="#316ac5"/><rect x="2" y="4" width="1" height="1" fill="#316ac5"/><rect x="3" y="4" width="1" height="1" fill="#000"/><rect x="4" y="4" width="1" height="1" fill="#316ac5"/><rect x="5" y="4" width="1" height="1" fill="#fff"/><rect x="6" y="4" width="1" height="1" fill="#316ac5"/><rect x="7" y="4" width="1" height="1" fill="#000"/><rect x="8" y="4" width="1" height="1" fill="#316ac5"/><rect x="9" y="4" width="1" height="1" fill="#000"/><rect x="2" y="5" width="1" height="1" fill="#fff"/><rect x="3" y="5" width="1" height="1" fill="#316ac5"/><rect x="4" y="5" width="1" height="1" fill="#fff"/><rect x="5" y="5" width="1" height="1" fill="#316ac5"/><rect x="6" y="5" width="1" height="1" fill="#fff"/><rect x="7" y="5" width="1" height="1" fill="#316ac5"/><rect x="8" y="5" width="1" height="1" fill="#000"/><rect x="9" y="5" width="1" height="1" fill="#316ac5"/><rect x="2" y="6" width="1" height="1" fill="#316ac5"/><rect x="3" y="6" width="1" height="1" fill="#000"/><rect x="4" y="6" width="1" height="1" fill="#316ac5"/><rect x="5" y="6" width="1" height="1" fill="#000"/><rect x="6" y="6" width="1" height="1" fill="#316ac5"/><rect x="7" y="6" width="1" height="1" fill="#fff"/><rect x="8" y="6" width="1" height="1" fill="#316ac5"/><rect x="9" y="6" width="1" height="1" fill="#fff"/><rect x="2" y="7" width="1" height="1" fill="#fff"/><rect x="3" y="7" width="1" height="1" fill="#316ac5"/><rect x="4" y="7" width="1" height="1" fill="#fff"/><rect x="5" y="7" width="1" height="1" fill="#316ac5"/><rect x="6" y="7" width="1" height="1" fill="#fff"/><rect x="7" y="7" width="1" height="1" fill="#316ac5"/><rect x="8" y="7" width="1" height="1" fill="#fff"/><rect x="9" y="7" width="1" height="1" fill="#316ac5"/><rect x="2" y="8" width="1" height="1" fill="#316ac5"/><rect x="3" y="8" width="1" height="1" fill="#000"/><rect x="4" y="8" width="1" height="1" fill="#316ac5"/><rect x="5" y="8" width="1" height="1" fill="#000"/><rect x="6" y="8" width="1" height="1" fill="#316ac5"/><rect x="7" y="8" width="1" height="1" fill="#000"/><rect x="8" y="8" width="1" height="1" fill="#316ac5"/><rect x="9" y="8" width="1" height="1" fill="#fff"/><rect x="2" y="9" width="1" height="1" fill="#fff"/><rect x="3" y="9" width="1" height="1" fill="#316ac5"/><rect x="4" y="9" width="1" height="1" fill="#fff"/><rect x="5" y="9" width="1" height="1" fill="#316ac5"/><rect x="6" y="9" width="1" height="1" fill="#fff"/><rect x="7" y="9" width="1" height="1" fill="#316ac5"/><rect x="8" y="9" width="1" height="1" fill="#fff"/><rect x="9" y="9" width="1" height="1" fill="#316ac5"/><rect x="2" y="10" width="1" height="1" fill="#316ac5"/><rect x="3" y="10" width="1" height="1" fill="#000"/><rect x="4" y="10" width="1" height="1" fill="#316ac5"/><rect x="5" y="10" width="1" height="1" fill="#000"/><rect x="6" y="10" width="1" height="1" fill="#316ac5"/><rect x="7" y="10" width="1" height="1" fill="#000"/><rect x="8" y="10" width="1" height="1" fill="#316ac5"/><rect x="9" y="10" width="1" height="1" fill="#fff"/><rect x="2" y="11" width="1" height="1" fill="#fff"/><rect x="3" y="11" width="1" height="1" fill="#316ac5"/><rect x="4" y="11" width="1" height="1" fill="#fff"/><rect x="5" y="11" width="1" height="1" fill="#316ac5"/><rect x="6" y="11" width="1" height="1" fill="#fff"/><rect x="7" y="11" width="1" height="1" fill="#316ac5"/><rect x="8" y="11" width="1" height="1" fill="#fff"/><rect x="9" y="11" width="1" height="1" fill="#316ac5"/><rect x="2" y="12" width="1" height="1" fill="#316ac5"/><rect x="3" y="12" width="1" height="1" fill="#000"/><rect x="4" y="12" width="1" height="1" fill="#316ac5"/><rect x="5" y="12" width="1" height="1" fill="#000"/><rect x="6" y="12" width="1" height="1" fill="#316ac5"/><rect x="7" y="12" width="1" height="1" fill="#fff"/><rect x="8" y="12" width="1" height="1" fill="#316ac5"/><rect x="9" y="12" width="1" height="1" fill="#fff"/><rect x="2" y="13" width="1" height="1" fill="#fff"/><rect x="3" y="13" width="1" height="1" fill="#316ac5"/><rect x="4" y="13" width="1" height="1" fill="#fff"/><rect x="5" y="13" width="1" height="1" fill="#316ac5"/><rect x="6" y="13" width="1" height="1" fill="#fff"/><rect x="7" y="13" width="1" height="1" fill="#316ac5"/><rect x="8" y="13" width="1" height="1" fill="#fff"/><rect x="9" y="13" width="1" height="1" fill="#316ac5"/><rect x="1" y="2" width="1" height="1" fill="#000"/><rect x="2" y="2" width="1" height="1" fill="#316ac5"/><rect x="3" y="2" width="1" height="1" fill="#000"/><rect x="4" y="2" width="1" height="1" fill="#316ac5"/><rect x="5" y="2" width="1" height="1" fill="#000"/><rect x="6" y="2" width="1" height="1" fill="#316ac5"/><rect x="7" y="2" width="1" height="1" fill="#000"/><rect x="1" y="3" width="1" height="1" fill="#316ac5"/><rect x="1" y="4" width="1" height="1" fill="#000"/><rect x="1" y="5" width="1" height="1" fill="#316ac5"/><rect x="1" y="6" width="1" height="1" fill="#000"/><rect x="1" y="7" width="1" height="1" fill="#316ac5"/><rect x="1" y="8" width="1" height="1" fill="#000"/><rect x="1" y="9" width="1" height="1" fill="#316ac5"/><rect x="1" y="10" width="1" height="1" fill="#000"/><rect x="1" y="11" width="1" height="1" fill="#316ac5"/><rect x="1" y="12" width="1" height="1" fill="#000"/><rect x="1" y="13" width="1" height="1" fill="#316ac5"/><rect x="1" y="14" width="1" height="1" fill="#000"/><rect x="2" y="14" width="1" height="1" fill="#316ac5"/><rect x="3" y="14" width="1" height="1" fill="#000"/><rect x="4" y="14" width="1" height="1" fill="#316ac5"/><rect x="5" y="14" width="1" height="1" fill="#000"/><rect x="6" y="14" width="1" height="1" fill="#316ac5"/><rect x="7" y="14" width="1" height="1" fill="#000"/><rect x="8" y="14" width="1" height="1" fill="#316ac5"/><rect x="9" y="14" width="1" height="1" fill="#000"/><rect x="10" y="14" width="1" height="1" fill="#316ac5"/><rect x="10" y="5" width="1" height="1" fill="#000"/><rect x="10" y="6" width="1" height="1" fill="#316ac5"/><rect x="10" y="7" width="1" height="1" fill="#000"/><rect x="10" y="8" width="1" height="1" fill="#316ac5"/><rect x="10" y="9" width="1" height="1" fill="#000"/><rect x="10" y="10" width="1" height="1" fill="#316ac5"/><rect x="10" y="11" width="1" height="1" fill="#000"/><rect x="10" y="12" width="1" height="1" fill="#316ac5"/><rect x="10" y="13" width="1" height="1" fill="#000"/></svg>
<div class="t sel nm" style="left:332px;top:180px">app.dat</div>
<div class="t sel sz" style="left:422px;top:180px">1098</div>
<div class="t sel tm" style="left:523px;top:180px;letter-spacing:-0.12px">25.05.2011 15:4...</div>
<svg class="ic" style="left:316px;top:196px" width="16" height="16"><use href="#ifile"/></svg>
<div class="t nm" style="left:332px;top:197px">HELP.HTM</div>
<div class="t sz" style="left:422px;top:197px">23092</div>
<div class="t tm" style="left:523px;top:197px;letter-spacing:-0.12px">01.01.2006 00:0...</div>
<svg class="ic" style="left:316px;top:213px" width="16" height="16"><use href="#ifile"/></svg>
<div class="t nm" style="left:332px;top:214px">INDEX.HTM</div>
<div class="t sz" style="left:422px;top:214px">396</div>
<div class="t tm" style="left:523px;top:214px;letter-spacing:-0.12px">01.01.2006 00:0...</div>
<svg class="ic" style="left:316px;top:230px" width="16" height="16"><use href="#ifile"/></svg>
<div class="t nm" style="left:332px;top:231px">info.htm</div>
<div class="t sz" style="left:422px;top:231px">617</div>
<div class="t tm" style="left:523px;top:231px;letter-spacing:-0.12px">20.05.2011 12:4...</div>
<svg class="ic" style="left:316px;top:247px" width="16" height="16"><use href="#ifile"/></svg>
<div class="t nm" style="left:332px;top:248px">KEYS.GIF</div>
<div class="t sz" style="left:422px;top:248px">3752</div>
<div class="t tm" style="left:523px;top:248px;letter-spacing:-0.12px">01.01.2006 00:0...</div>
<svg class="ic" style="left:316px;top:264px" width="16" height="16"><use href="#ifile"/></svg>
<div class="t nm" style="left:332px;top:265px">NAVBAR.HTM</div>
<div class="t sz" style="left:422px;top:265px">2547</div>
<div class="t tm" style="left:523px;top:265px;letter-spacing:-0.12px">01.01.2006 00:0...</div>
<svg class="ic" style="left:316px;top:281px" width="16" height="16"><use href="#ifile"/></svg>
<div class="t nm" style="left:332px;top:282px">NAVBARBG.GIF</div>
<div class="t sz" style="left:422px;top:282px">268</div>
<div class="t tm" style="left:523px;top:282px;letter-spacing:-0.12px">01.01.2006 00:0...</div>
<svg class="ic" style="left:316px;top:298px" width="16" height="16"><use href="#ifile"/></svg>
<div class="t nm" style="left:332px;top:299px">STOP.GIF</div>
<div class="t sz" style="left:422px;top:299px">347</div>
<div class="t tm" style="left:523px;top:299px;letter-spacing:-0.12px">01.01.2006 00:0...</div>
<svg class="ic" style="left:316px;top:315px" width="16" height="16"><use href="#ifile"/></svg>
<div class="t nm" style="left:332px;top:316px">target1.txt</div>
<div class="t sz" style="left:422px;top:316px">241</div>
<div class="t tm" style="left:523px;top:316px;letter-spacing:-0.12px">01.01.2006 00:0...</div>
<svg class="ic" style="left:316px;top:332px" width="16" height="16"><use href="#ifile"/></svg>
<div class="t nm" style="left:332px;top:333px">target10.txt</div>
<div class="t sz" style="left:422px;top:333px">245</div>
<div class="t tm" style="left:523px;top:333px;letter-spacing:-0.12px">24.05.2011 14:0...</div>
<svg class="ic" style="left:316px;top:349px" width="16" height="16"><use href="#ifile"/></svg>
<div class="t nm" style="left:332px;top:350px">target11.txt</div>
<div class="t sz" style="left:422px;top:350px">240</div>
<div class="t tm" style="left:523px;top:350px;letter-spacing:-0.12px">01.01.2006 00:0...</div>
<svg class="ic" style="left:316px;top:366px" width="16" height="16"><use href="#ifile"/></svg>
<div class="t nm" style="left:332px;top:367px">target2.txt</div>
<div class="t sz" style="left:422px;top:367px">214</div>
<div class="t tm" style="left:523px;top:367px;letter-spacing:-0.12px">25.05.2011 09:3...</div>
<svg class="ic" style="left:316px;top:383px" width="16" height="16"><use href="#ifile"/></svg>
<div class="t nm" style="left:332px;top:384px">target28.txt</div>
<div class="t sz" style="left:422px;top:384px">241</div>
<div class="t tm" style="left:523px;top:384px;letter-spacing:-0.12px">25.05.2011 09:4...</div>
<svg class="ic" style="left:316px;top:400px" width="16" height="16"><use href="#ifile"/></svg>
<div class="t nm" style="left:332px;top:401px">target3.txt</div>
<div class="t sz" style="left:422px;top:401px">214</div>
<div class="t tm" style="left:523px;top:401px;letter-spacing:-0.12px">25.05.2011 09:4...</div>
<svg class="ic" style="left:316px;top:417px" width="16" height="16"><use href="#ifile"/></svg>
<div class="t nm" style="left:332px;top:418px">TB-ERASE.GIF</div>
<div class="t sz" style="left:422px;top:418px">190</div>
<div class="t tm" style="left:523px;top:418px;letter-spacing:-0.12px">01.01.2006 00:0...</div>
<svg class="ic" style="left:316px;top:434px" width="16" height="16"><use href="#ifile"/></svg>
<div class="t nm" style="left:332px;top:435px">TB-GO.GIF</div>
<div class="t sz" style="left:422px;top:435px">70</div>
<div class="t tm" style="left:523px;top:435px;letter-spacing:-0.12px">01.01.2006 00:0...</div>
<svg class="ic" style="left:316px;top:451px" width="16" height="16"><use href="#ifile"/></svg>
<div class="t nm" style="left:332px;top:452px">TB-SATEL.GIF</div>
<div class="t sz" style="left:422px;top:452px">108</div>
<div class="t tm" style="left:523px;top:452px;letter-spacing:-0.12px">01.01.2006 00:0...</div>
<svg class="ic" style="left:316px;top:468px" width="16" height="16"><use href="#ifile"/></svg>
<div class="t nm" style="left:332px;top:469px">TB-SAVE.GIF</div>
<div class="t sz" style="left:422px;top:469px">143</div>
<div class="t tm" style="left:523px;top:469px;letter-spacing:-0.12px">01.01.2006 00:0...</div>

<!-- status -->
<div style="left:4px;top:517px;width:613px;height:1px;background:#aca899"></div>
<div style="left:4px;top:533px;width:613px;height:1px;background:#fff"></div>
<div style="left:616px;top:515px;width:1px;height:19px;background:#fff"></div>
<div class="menu" style="left:6px;top:520px">Connected to 192.168.2.77.</div>
<svg style="left:0;top:0" width="621" height="538"><rect x="17" y="114" width="1" height="1" fill="#8c8a80"/><rect x="16" y="115" width="1" height="1" fill="#8c8a80"/><rect x="16" y="116" width="1" height="1" fill="#8c8a80"/><rect x="15" y="117" width="1" height="1" fill="#8c8a80"/><rect x="15" y="118" width="1" height="1" fill="#8c8a80"/><rect x="14" y="119" width="1" height="1" fill="#8c8a80"/><rect x="18" y="115" width="1" height="1" fill="#ffffff"/><rect x="18" y="116" width="1" height="1" fill="#ffffff"/><rect x="19" y="117" width="1" height="1" fill="#ffffff"/><rect x="19" y="118" width="1" height="1" fill="#ffffff"/><rect x="20" y="119" width="1" height="1" fill="#ffffff"/><rect x="14" y="120" width="1" height="1" fill="#ffffff"/><rect x="15" y="120" width="1" height="1" fill="#ffffff"/><rect x="16" y="120" width="1" height="1" fill="#ffffff"/><rect x="17" y="120" width="1" height="1" fill="#ffffff"/><rect x="18" y="120" width="1" height="1" fill="#ffffff"/><rect x="19" y="120" width="1" height="1" fill="#ffffff"/><rect x="20" y="120" width="1" height="1" fill="#ffffff"/><rect x="21" y="120" width="1" height="1" fill="#ffffff"/><rect x="325" y="114" width="1" height="1" fill="#8c8a80"/><rect x="324" y="115" width="1" height="1" fill="#8c8a80"/><rect x="324" y="116" width="1" height="1" fill="#8c8a80"/><rect x="323" y="117" width="1" height="1" fill="#8c8a80"/><rect x="323" y="118" width="1" height="1" fill="#8c8a80"/><rect x="322" y="119" width="1" height="1" fill="#8c8a80"/><rect x="326" y="115" width="1" height="1" fill="#ffffff"/><rect x="326" y="116" width="1" height="1" fill="#ffffff"/><rect x="327" y="117" width="1" height="1" fill="#ffffff"/><rect x="327" y="118" width="1" height="1" fill="#ffffff"/><rect x="328" y="119" width="1" height="1" fill="#ffffff"/><rect x="322" y="120" width="1" height="1" fill="#ffffff"/><rect x="323" y="120" width="1" height="1" fill="#ffffff"/><rect x="324" y="120" width="1" height="1" fill="#ffffff"/><rect x="325" y="120" width="1" height="1" fill="#ffffff"/><rect x="326" y="120" width="1" height="1" fill="#ffffff"/><rect x="327" y="120" width="1" height="1" fill="#ffffff"/><rect x="328" y="120" width="1" height="1" fill="#ffffff"/><rect x="329" y="120" width="1" height="1" fill="#ffffff"/><rect x="615" y="521" width="1" height="1" fill="#ffffff"/><rect x="615" y="522" width="1" height="1" fill="#aca899"/><rect x="615" y="523" width="1" height="1" fill="#aca899"/><rect x="614" y="522" width="1" height="1" fill="#ffffff"/><rect x="614" y="523" width="1" height="1" fill="#aca899"/><rect x="614" y="524" width="1" height="1" fill="#aca899"/><rect x="613" y="523" width="1" height="1" fill="#ffffff"/><rect x="613" y="524" width="1" height="1" fill="#aca899"/><rect x="613" y="525" width="1" height="1" fill="#aca899"/><rect x="612" y="524" width="1" height="1" fill="#ffffff"/><rect x="612" y="525" width="1" height="1" fill="#aca899"/><rect x="612" y="526" width="1" height="1" fill="#aca899"/><rect x="611" y="525" width="1" height="1" fill="#ffffff"/><rect x="611" y="526" width="1" height="1" fill="#aca899"/><rect x="611" y="527" width="1" height="1" fill="#aca899"/><rect x="610" y="526" width="1" height="1" fill="#ffffff"/><rect x="610" y="527" width="1" height="1" fill="#aca899"/><rect x="610" y="528" width="1" height="1" fill="#aca899"/><rect x="609" y="527" width="1" height="1" fill="#ffffff"/><rect x="609" y="528" width="1" height="1" fill="#aca899"/><rect x="609" y="529" width="1" height="1" fill="#aca899"/><rect x="608" y="528" width="1" height="1" fill="#ffffff"/><rect x="608" y="529" width="1" height="1" fill="#aca899"/><rect x="608" y="530" width="1" height="1" fill="#aca899"/><rect x="607" y="529" width="1" height="1" fill="#ffffff"/><rect x="607" y="530" width="1" height="1" fill="#aca899"/><rect x="607" y="531" width="1" height="1" fill="#aca899"/><rect x="606" y="530" width="1" height="1" fill="#ffffff"/><rect x="606" y="531" width="1" height="1" fill="#aca899"/><rect x="606" y="532" width="1" height="1" fill="#aca899"/><rect x="605" y="531" width="1" height="1" fill="#ffffff"/><rect x="605" y="532" width="1" height="1" fill="#aca899"/><rect x="604" y="532" width="1" height="1" fill="#ffffff"/><rect x="615" y="525" width="1" height="1" fill="#ffffff"/><rect x="615" y="526" width="1" height="1" fill="#aca899"/><rect x="615" y="527" width="1" height="1" fill="#aca899"/><rect x="614" y="526" width="1" height="1" fill="#ffffff"/><rect x="614" y="527" width="1" height="1" fill="#aca899"/><rect x="614" y="528" width="1" height="1" fill="#aca899"/><rect x="613" y="527" width="1" height="1" fill="#ffffff"/><rect x="613" y="528" width="1" height="1" fill="#aca899"/><rect x="613" y="529" width="1" height="1" fill="#aca899"/><rect x="612" y="528" width="1" height="1" fill="#ffffff"/><rect x="612" y="529" width="1" height="1" fill="#aca899"/><rect x="612" y="530" width="1" height="1" fill="#aca899"/><rect x="611" y="529" width="1" height="1" fill="#ffffff"/><rect x="611" y="530" width="1" height="1" fill="#aca899"/><rect x="611" y="531" width="1" height="1" fill="#aca899"/><rect x="610" y="530" width="1" height="1" fill="#ffffff"/><rect x="610" y="531" width="1" height="1" fill="#aca899"/><rect x="610" y="532" width="1" height="1" fill="#aca899"/><rect x="609" y="531" width="1" height="1" fill="#ffffff"/><rect x="609" y="532" width="1" height="1" fill="#aca899"/><rect x="608" y="532" width="1" height="1" fill="#ffffff"/><rect x="615" y="529" width="1" height="1" fill="#ffffff"/><rect x="615" y="530" width="1" height="1" fill="#aca899"/><rect x="615" y="531" width="1" height="1" fill="#aca899"/><rect x="614" y="530" width="1" height="1" fill="#ffffff"/><rect x="614" y="531" width="1" height="1" fill="#aca899"/><rect x="614" y="532" width="1" height="1" fill="#aca899"/><rect x="613" y="531" width="1" height="1" fill="#ffffff"/><rect x="613" y="532" width="1" height="1" fill="#aca899"/><rect x="612" y="532" width="1" height="1" fill="#ffffff"/></svg>
</body></html>
